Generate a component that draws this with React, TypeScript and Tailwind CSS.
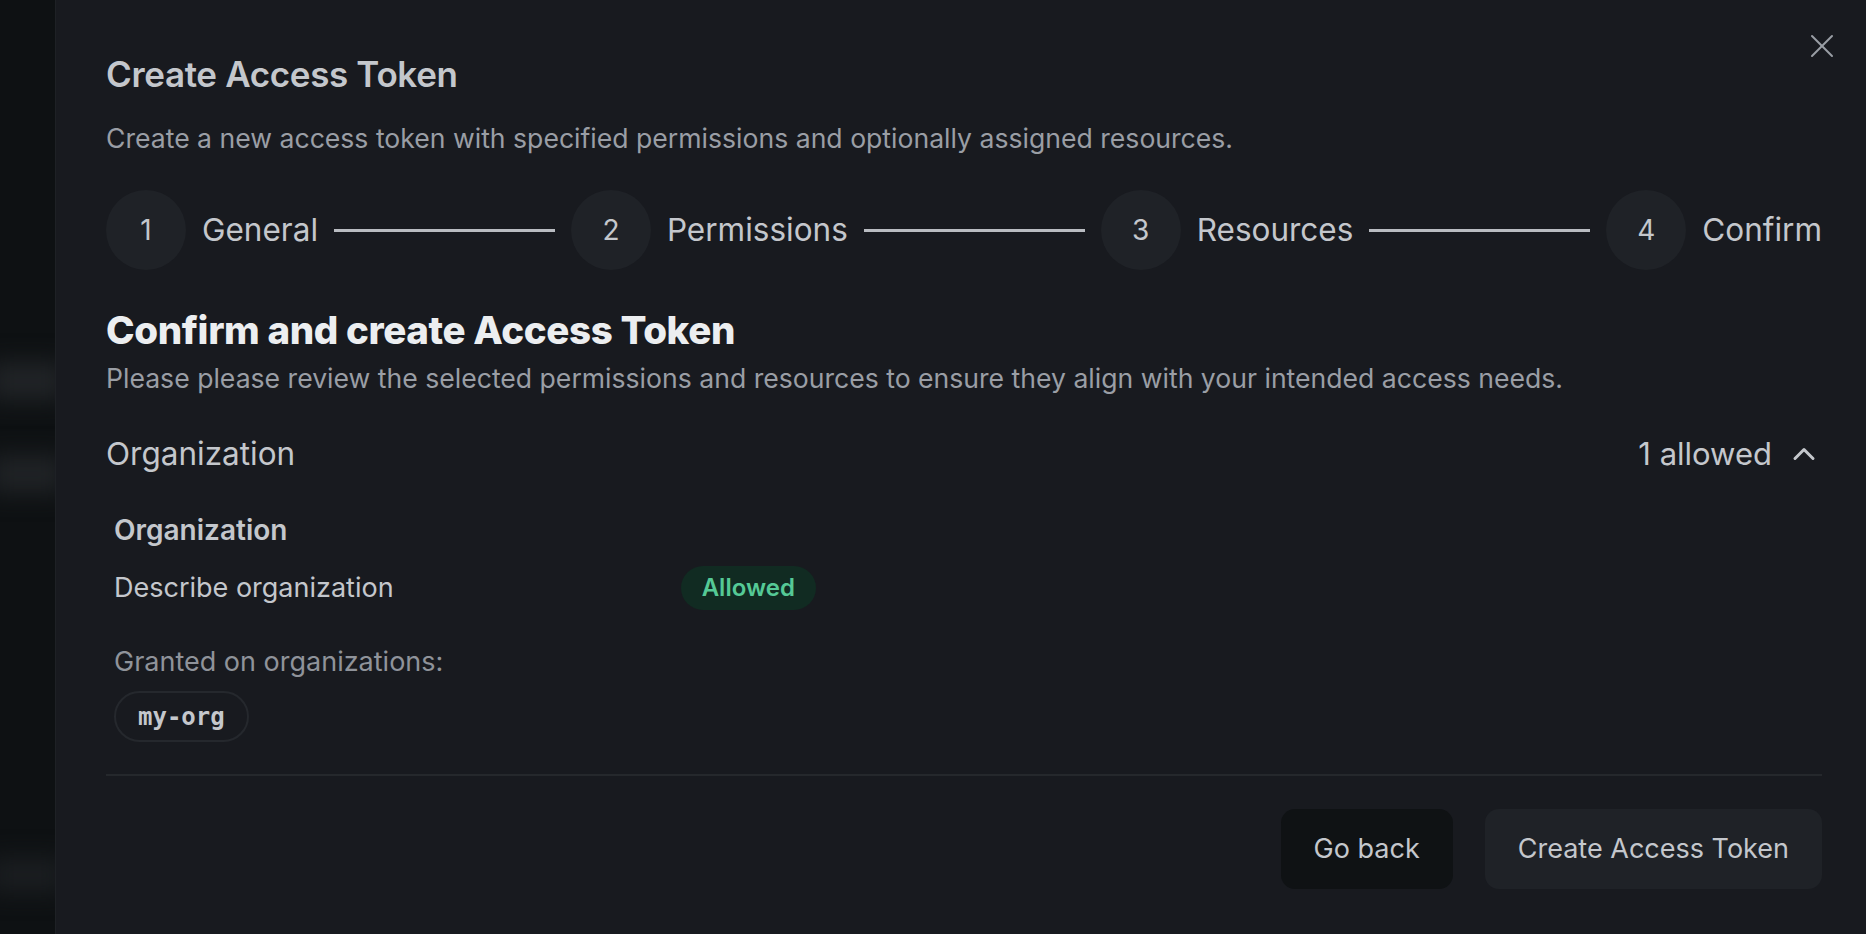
import { Fragment } from "react";
import { ChevronUp, X } from "lucide-react";

const steps = ["General", "Permissions", "Resources", "Confirm"];

export default function App() {
  return (
    <div className="flex h-[934px] w-full overflow-hidden bg-[#181a1f] font-['Inter',sans-serif] text-[#c4c7cc]">
      {/* faded page behind the sheet */}
      <div className="relative w-[56px] shrink-0 overflow-hidden border-r border-[#1e2125] bg-[#0e1113]">
        <div className="absolute inset-x-[-10px] top-[362px] h-[38px] bg-[#212427] blur-md" />
        <div className="absolute inset-x-[-10px] top-[455px] h-[38px] bg-[#202326] blur-md" />
        <div className="absolute inset-x-[-10px] top-[858px] h-[34px] bg-[#1b1e21] blur-md" />
      </div>

      <div className="relative flex-1 pl-[50px] pr-[44px] pt-[54px]">
        <button className="absolute right-[24px] top-[26px] text-[#9a9ea5]">
          <X size={40} strokeWidth={1.2} />
        </button>

        <h1 className="text-[35px] font-semibold leading-[40px] tracking-[-0.01em] text-[#c4c7cc]">
          Create Access Token
        </h1>
        <p className="mt-[26px] text-[26.6px] leading-[36px] text-[#9a9ea5]">
          Create a new access token with specified permissions and optionally assigned resources.
        </p>

        {/* stepper */}
        <div className="mt-[34px] flex items-center gap-4">
          {steps.map((s, i) => (
            <Fragment key={s}>
              <div className="flex h-20 w-20 shrink-0 items-center justify-center rounded-full bg-[#1f2227] text-[28px] text-[#c4c7cc]">
                {i + 1}
              </div>
              <span className="text-[31.5px] leading-[40px] text-[#c4c7cc]">{s}</span>
              {i < steps.length - 1 && <div className="h-[3px] flex-1 bg-[#b9bcc1]" />}
            </Fragment>
          ))}
        </div>

        <h2 className="mt-[40px] text-[38.5px] font-extrabold leading-[40px] tracking-[-0.01em] text-[#eceef0]">
          Confirm and create Access Token
        </h2>
        <p className="mt-[10px] text-[26.6px] leading-[36px] text-[#9a9ea5]">
          Please please review the selected permissions and resources to ensure they align with your intended access needs.
        </p>

        {/* accordion header */}
        <div className="mt-[38px] flex items-center justify-between">
          <span className="text-[31.5px] leading-[40px] text-[#c4c7cc]">Organization</span>
          <div className="flex items-center gap-[14px]">
            <span className="text-[31px] leading-[40px] text-[#c4c7cc]">1 allowed</span>
            <ChevronUp size={36} strokeWidth={2} className="text-[#c4c7cc]" />
          </div>
        </div>

        <div className="px-2">
          <div className="mt-[38px] text-[28px] font-semibold leading-[36px] text-[#c4c7cc]">Organization</div>
          <div className="mt-[18px] grid grid-cols-3 items-center">
            <span className="text-[27px] leading-[36px] text-[#c4c7cc]">Describe organization</span>
            <span className="flex h-[44px] w-fit items-center rounded-full bg-[#112b22] px-[21px] text-[24px] font-semibold text-[#55c996]">
              Allowed
            </span>
          </div>
          <div className="mt-[34px] text-[27px] leading-[36px] text-[#8f939a]">Granted on organizations:</div>
          <div className="mt-[11px] flex">
            <span className="flex h-[51px] items-center rounded-full border-2 border-[#25282d] px-[22px] font-['DejaVu_Sans_Mono',monospace] text-[24px] font-bold text-[#c4c7cc]">
              my-org
            </span>
          </div>
        </div>

        <div className="mt-[32px] h-[2px] bg-[#25282c]" />

        <div className="mt-[33px] flex justify-end gap-8">
          <button className="h-20 rounded-[14px] bg-[#0f1214] px-[33px] text-[27px] text-[#c4c7cc]">Go back</button>
          <button className="h-20 rounded-[14px] bg-[#1f2227] px-[33px] text-[27px] text-[#c4c7cc]">
            Create Access Token
          </button>
        </div>
      </div>
    </div>
  );
}
